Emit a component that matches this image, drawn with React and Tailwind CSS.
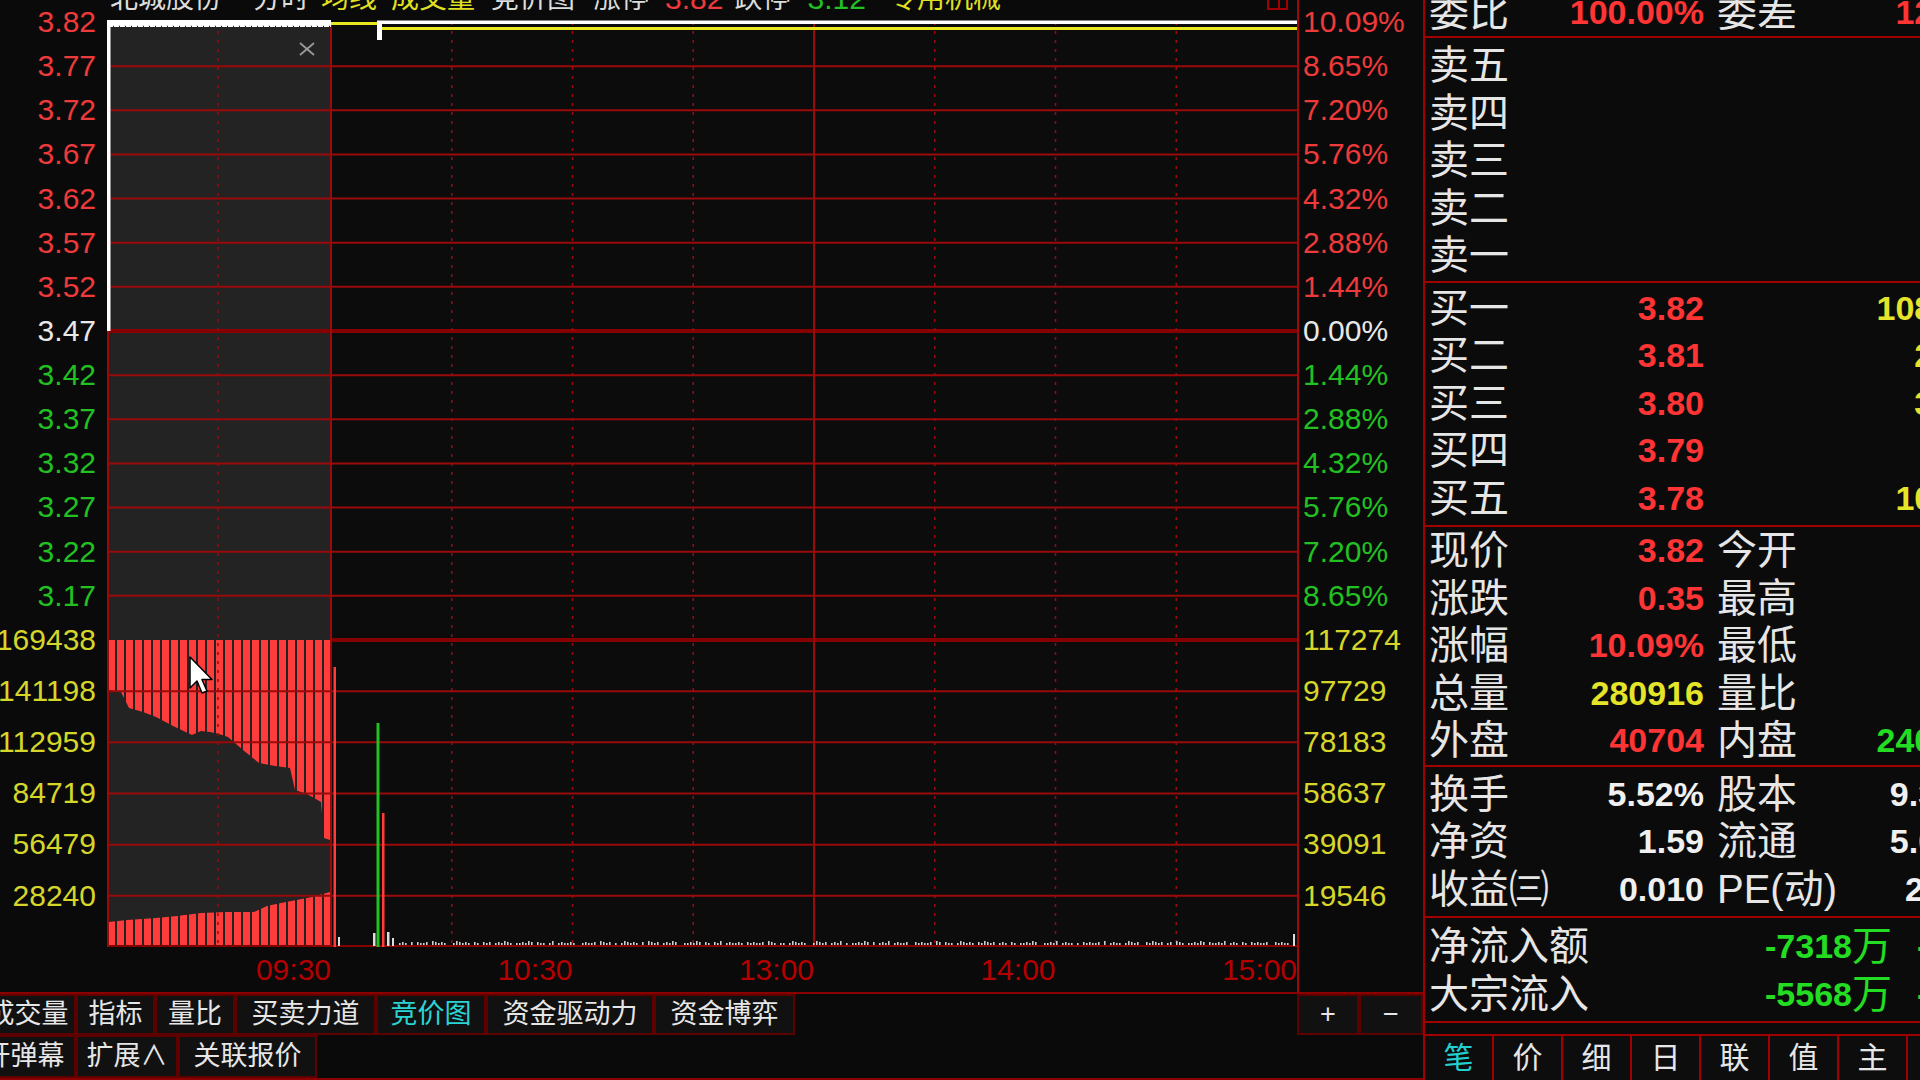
import React from "react";

// ── colours ──────────────────────────────────────────────
const GRID = "#9a0a0a";
const GRID_DARK = "#860000";

const priceLeft = [
  ["3.82", "text-[#ee3a3a]"], ["3.77", "text-[#ee3a3a]"], ["3.72", "text-[#ee3a3a]"],
  ["3.67", "text-[#ee3a3a]"], ["3.62", "text-[#ee3a3a]"], ["3.57", "text-[#ee3a3a]"],
  ["3.52", "text-[#ee3a3a]"], ["3.47", "text-[#e8e8e8]"], ["3.42", "text-[#22c022]"],
  ["3.37", "text-[#22c022]"], ["3.32", "text-[#22c022]"], ["3.27", "text-[#22c022]"],
  ["3.22", "text-[#22c022]"], ["3.17", "text-[#22c022]"],
];
const priceRight = [
  ["10.09%", "text-[#ee3a3a]"], ["8.65%", "text-[#ee3a3a]"], ["7.20%", "text-[#ee3a3a]"],
  ["5.76%", "text-[#ee3a3a]"], ["4.32%", "text-[#ee3a3a]"], ["2.88%", "text-[#ee3a3a]"],
  ["1.44%", "text-[#ee3a3a]"], ["0.00%", "text-[#e8e8e8]"], ["1.44%", "text-[#22c022]"],
  ["2.88%", "text-[#22c022]"], ["4.32%", "text-[#22c022]"], ["5.76%", "text-[#22c022]"],
  ["7.20%", "text-[#22c022]"], ["8.65%", "text-[#22c022]"],
];
const volLeft = ["169438", "141198", "112959", "84719", "56479", "28240"];
const volRight = ["117274", "97729", "78183", "58637", "39091", "19546"];

// ── Title ────────────────────────────────────────────────
function Title() {
  return (
    <div className="flex h-[22px] overflow-hidden">
      <div className="-mt-[15px] flex h-[28px] items-center text-[28px] leading-none text-[#dcdcdc]">
        <span className="ml-[110px]">北城股份</span>
        <span className="ml-[31px]">分时</span>
        <span className="ml-[12px] text-[#e0e020]">均线</span>
        <span className="ml-[14px] text-[#e0e020]">成交量</span>
        <span className="ml-[16px]">竞价图</span>
        <span className="ml-[18px]">涨停</span>
        <span className="ml-[16px] text-[30px] text-[#ee3a3a]">3.82</span>
        <span className="ml-[11px]">跌停</span>
        <span className="ml-[17px] text-[30px] text-[#22c022]">3.12</span>
        <span className="ml-[23px] text-[#e0e020]">专用机械</span>
      </div>
      <div className="ml-auto mr-[9px] -mt-[4px] flex h-[14px] w-[21px] border-2 border-[#a00000]">
        <div className="ml-auto h-full w-[8px] border-l-2 border-[#a00000]" />
      </div>
    </div>
  );
}

// ── Axis columns ─────────────────────────────────────────
function LeftAxis() {
  return (
    <div className="flex w-[107px] shrink-0 flex-col text-[30px] leading-none">
      <div className="-mt-[22px] flex flex-col">
        {priceLeft.map(([t, c], i) => (
          <div key={i} className={`flex h-[44.14px] items-center justify-end pr-[11px] ${c}`}>{t}</div>
        ))}
      </div>
      <div className="-mt-[3.6px] flex flex-col">
        {volLeft.map((t, i) => (
          <div key={i} className="flex h-[51.17px] items-center justify-end pr-[11px] text-[#d6d62a]">{t}</div>
        ))}
      </div>
    </div>
  );
}

function RightAxis() {
  return (
    <div className="flex h-[925px] flex-col text-[30px] leading-none">
      <div className="-mt-[22px] flex flex-col">
        {priceRight.map(([t, c], i) => (
          <div key={i} className={`flex h-[44.14px] items-center pl-[4px] ${c}`}>{t}</div>
        ))}
      </div>
      <div className="-mt-[3.6px] flex flex-col">
        {volRight.map((t, i) => (
          <div key={i} className="flex h-[51.17px] items-center pl-[4px] text-[#d6d62a]">{t}</div>
        ))}
      </div>
    </div>
  );
}

// ── Plot (price + volume drawing) ────────────────────────
function Plot() {
  const W = 1190;
  const H = 925;
  const pStep = 618 / 14;
  const vTop = 618;
  const vStep = 307 / 6;
  const vx = Array.from({ length: 9 }, (_, i) => 224 + i * 120.75);

  const bars = [];
  for (let x = 1; x < 222; x += 9) bars.push(x);

  const ticks = [];
  for (let i = 0; i < 320; i++) {
    const x = 292 + i * 3;
    if (x > 1184) break;
    if (i % 7 === 3 || i % 11 === 5) continue;
    ticks.push([x, [2, 3, 2, 4, 3, 2, 3, 2][i % 8]]);
  }

  const gray =
    "2,668 14,670 22,686 36,690 49,695 66,704 85,713 94,709 103,710 112,712 121,715 136,728 152,741 168,744 183,746 188,768 200,772 214,780 217,816 223,818 223,870 205,875 174,881 160,884 147,890 120,890 94,891 70,894 49,896 20,898 2,900";

  return (
    <svg width={W} height={H} viewBox={`0 0 ${W} ${H}`} className="block shrink-0 overflow-visible bg-[#0c0c0c]">
      {/* auction shading */}
      <rect x="0" y="0" width="224" height={H} fill="#232323" />

      {/* auction volume */}
      {bars.map((x) => (
        <rect key={x} x={x} y={vTop} width="7" height={H - vTop} fill="#ff3c3c" />
      ))}
      <polygon points={gray} fill="#232323" />

      {/* horizontal grid */}
      {Array.from({ length: 13 }, (_, k) => k + 1).map((k) => (
        <line key={"p" + k} x1="0" x2={W} y1={k * pStep} y2={k * pStep}
          stroke={k === 7 ? GRID_DARK : GRID} strokeWidth={k === 7 ? 4 : 2} />
      ))}
      <line x1="224" x2={W} y1={vTop} y2={vTop} stroke={GRID_DARK} strokeWidth="4" />
      {[1, 2, 3, 4, 5].map((j) => (
        <line key={"v" + j} x1="0" x2={W} y1={vTop + j * vStep} y2={vTop + j * vStep} stroke={GRID} strokeWidth="2" />
      ))}
      <line x1="0" x2={W} y1={H - 1} y2={H - 1} stroke={GRID_DARK} strokeWidth="2" />

      {/* vertical grid */}
      <line x1="1" x2="1" y1="0" y2={H} stroke={GRID} strokeWidth="2" />
      <line x1="111" x2="111" y1="0" y2={H} stroke={GRID} strokeWidth="1.5" strokeDasharray="3 6" />
      {vx.slice(0, 8).map((x, i) => (
        <line key={"x" + i} x1={x} x2={x} y1="0" y2={H} stroke={GRID}
          strokeWidth={i === 0 || i === 4 ? 2 : 1.5} strokeDasharray={i === 0 || i === 4 ? undefined : "3 6"} />
      ))}

      {/* price / average lines */}
      <rect x="0" y="-2" width="224" height="7" fill="#ffffff" />
      <line x1="0" x2="224" y1="4.5" y2="4.5" stroke="#232323" strokeWidth="1.5" strokeDasharray="1 5" />
      <rect x="0" y="0" width="3.5" height="309" fill="#ffffff" />
      <rect x="224" y="0" width="46" height="3" fill="#e8e820" />
      <rect x="270" y="-1.5" width={W - 270} height="3.5" fill="#ffffff" />
      <rect x="270" y="0" width="5" height="18" fill="#ffffff" />
      <rect x="275" y="5" width={W - 275} height="3" fill="#e8e820" />

      {/* continuous trading volume */}
      <rect x="226.5" y="645" width="2.5" height={H - 645} fill="#ff3c3c" />
      <rect x="269.5" y="701" width="3" height={H - 701} fill="#22c022" />
      <rect x="275" y="791" width="2.5" height={H - 791} fill="#ff3c3c" />
      <rect x="231" y="915" width="2" height="9" fill="#dddddd" />
      <rect x="266" y="911" width="2.5" height="13" fill="#dddddd" />
      <rect x="280" y="910" width="2.5" height="14" fill="#dddddd" />
      <rect x="285" y="916" width="2" height="8" fill="#dddddd" />
      {ticks.map(([x, h]) => (
        <rect key={"t" + x} x={x} y={923 - h} width="1.6" height={h} fill="#d0d0d0" />
      ))}
      <rect x="1186" y="912" width="2" height="12" fill="#dddddd" />

      {/* close mark */}
      <line x1="193" y1="21" x2="207" y2="33" stroke="#9a9a9a" strokeWidth="1.8" />
      <line x1="207" y1="21" x2="193" y2="33" stroke="#9a9a9a" strokeWidth="1.8" />

      {/* mouse cursor */}
      <polygon
        points="83,635 83,666 90,659 95,671 100,669 95,657.5 105,657.5"
        fill="#ffffff" stroke="#000000" strokeWidth="1.5" strokeLinejoin="round"
      />
    </svg>
  );
}

// ── Time axis ────────────────────────────────────────────
function TimeAxis() {
  return (
    <div className="flex h-[45px] items-center text-[30px] leading-none text-[#b40000]">
      <div className="w-[107px]" />
      <div className="w-[224px] text-right">09:30</div>
      <div className="w-[241.5px] text-right">10:30</div>
      <div className="w-[241.5px] text-right">13:00</div>
      <div className="w-[241.5px] text-right">14:00</div>
      <div className="w-[241.5px] text-right">15:00</div>
    </div>
  );
}

// ── Bottom tabs (left) ───────────────────────────────────
function Cell({ w, children, active }) {
  return (
    <div
      className={`flex h-full shrink-0 items-center justify-center border-2 border-[#5c0000] bg-[#111111] text-[27px] leading-none ${
        active ? "text-[#2ad4d4]" : "text-[#e6e6e6]"
      } ${w}`}
    >
      {children}
    </div>
  );
}

function LeftTabs() {
  return (
    <div className="flex flex-col">
      <div className="flex h-[43px] border-t-2 border-[#8a0000]">
        <div className="-ml-[20px] flex h-full">
          <Cell w="w-[96px]">成交量</Cell>
          <Cell w="w-[79px]">指标</Cell>
          <Cell w="w-[80px]">量比</Cell>
          <Cell w="w-[141px]">买卖力道</Cell>
          <Cell w="w-[110px]" active>竞价图</Cell>
          <Cell w="w-[168px]">资金驱动力</Cell>
          <Cell w="w-[141px]">资金博弈</Cell>
        </div>
        <div className="flex-1" />
        <Cell w="w-[62px]">+</Cell>
        <Cell w="w-[64px]">−</Cell>
      </div>
      <div className="flex h-[45px] border-b-2 border-[#8a0000]">
        <div className="-ml-[28px] flex h-full">
          <Cell w="w-[104px]">开弹幕</Cell>
          <Cell w="w-[102px]">扩展∧</Cell>
          <Cell w="w-[139px]">关联报价</Cell>
        </div>
      </div>
    </div>
  );
}

// ── Quote panel (right) ──────────────────────────────────
function QRow({ l1, v1, c1, l2, v2, c2, h = "h-[47.5px]" }) {
  return (
    <div className={`flex items-center ${h}`}>
      <div className="flex w-[279px] items-center justify-between pl-[4px]">
        <span className="text-[40px] leading-none text-[#e6e6e6]">{l1}</span>
        <span className={`text-[34px] font-bold leading-none ${c1}`}>{v1}</span>
      </div>
      {l2 && (
        <div className="ml-[13px] flex w-[273px] items-center justify-between">
          <span className="text-[40px] leading-none text-[#e6e6e6]">{l2}</span>
          <span className={`text-[34px] font-bold leading-none ${c2}`}>{v2}</span>
        </div>
      )}
    </div>
  );
}

function FlowRow({ label, v1, v2 }) {
  return (
    <div className="flex h-[48px] items-center">
      <span className="pl-[4px] text-[40px] leading-none text-[#e6e6e6]">{label}</span>
      <span className="ml-auto flex items-center text-[#22dd22]">
        <span className="text-[34px] font-bold leading-none">{v1}</span>
        <span className="text-[40px] leading-none">万</span>
      </span>
      <span className="ml-[25px] w-[73px] text-[34px] font-bold leading-none text-[#22dd22]">{v2}</span>
    </div>
  );
}

function QuotePanel() {
  const R = "text-[#ff3434]";
  const Y = "text-[#e4e428]";
  const G = "text-[#22dd22]";
  const Wt = "text-[#f0f0f0]";
  const tabs = ["笔", "价", "细", "日", "联", "值", "主", "资"];
  return (
    <div className="flex h-[1080px] w-[567px] shrink-0 flex-col border-l-2 border-[#a00000] bg-[#0b0b0b]">
      <div className="-mt-[12px] border-b-2 border-[#a00000]">
        <QRow l1="委比" v1="100.00%" c1={R} l2="委差" v2="12543" c2={R} />
      </div>
      <div className="border-b-2 border-[#a00000] pb-[2px] pt-[4px]">
        {["卖五", "卖四", "卖三", "卖二", "卖一"].map((t) => (
          <QRow key={t} l1={t} />
        ))}
      </div>
      <div className="border-b-2 border-[#a00000] pb-[3px] pt-[1px]">
        <QRow l1="买一" v1="3.82" c1={R} l2=" " v2="108537" c2={Y} />
        <QRow l1="买二" v1="3.81" c1={R} l2=" " v2="2136" c2={Y} />
        <QRow l1="买三" v1="3.80" c1={R} l2=" " v2="3420" c2={Y} />
        <QRow l1="买四" v1="3.79" c1={R} l2=" " v2="865" c2={Y} />
        <QRow l1="买五" v1="3.78" c1={R} l2=" " v2="10285" c2={Y} />
      </div>
      <div className="border-b-2 border-[#a00000] pb-[1px]">
        <QRow l1="现价" v1="3.82" c1={R} l2="今开" v2="3.82" c2={R} />
        <QRow l1="涨跌" v1="0.35" c1={R} l2="最高" v2="3.82" c2={R} />
        <QRow l1="涨幅" v1="10.09%" c1={R} l2="最低" v2="3.82" c2={R} />
        <QRow l1="总量" v1="280916" c1={Y} l2="量比" v2="1.86" c2={Wt} />
        <QRow l1="外盘" v1="40704" c1={R} l2="内盘" v2="240212" c2={G} />
      </div>
      <div className="border-b-2 border-[#a00000] pb-[3px] pt-[3px]">
        <QRow l1="换手" v1="5.52%" c1={Wt} l2="股本" v2="9.36亿" c2={Wt} />
        <QRow l1="净资" v1="1.59" c1={Wt} l2="流通" v2="5.02亿" c2={Wt} />
        <QRow l1="收益㈢" v1="0.010" c1={Wt} l2="PE(动)" v2="286.5" c2={Wt} />
      </div>
      <div className="border-b-2 border-[#a00000] pb-[3px] pt-[4px]">
        <FlowRow label="净流入额" v1="-7318" v2="-2.61%" />
        <FlowRow label="大宗流入" v1="-5568" v2="-1.98%" />
      </div>
      <div className="flex-1" />
      <div className="flex h-[46px] border-t-2 border-[#a00000] bg-[#0d0d0d]">
        {tabs.map((t, i) => (
          <div
            key={t}
            className={`flex h-full w-[69px] shrink-0 items-center justify-center border-r-2 border-[#a00000] text-[30px] leading-none ${
              i === 0 ? "text-[#22d0d0]" : "text-[#e6e6e6]"
            }`}
          >
            {t}
          </div>
        ))}
      </div>
    </div>
  );
}

// ── Page ─────────────────────────────────────────────────
export default function App() {
  return (
    <div className="flex h-[1080px] w-[1920px] overflow-hidden bg-[#0a0a0a] font-['Liberation_Sans','Noto_Sans_CJK_SC',sans-serif]">
      <div className="flex w-[1423px] shrink-0 flex-col">
        <div className="flex h-[992px]">
          <div className="flex w-[1297px] shrink-0 flex-col">
            <Title />
            <div className="flex h-[925px]">
              <LeftAxis />
              <Plot />
            </div>
            <TimeAxis />
          </div>
          <div className="flex w-[126px] shrink-0 flex-col border-l-2 border-[#9a0a0a]">
            <div className="h-[22px]" />
            <RightAxis />
            <div className="h-[45px]" />
          </div>
        </div>
        <LeftTabs />
      </div>
      <QuotePanel />
    </div>
  );
}
